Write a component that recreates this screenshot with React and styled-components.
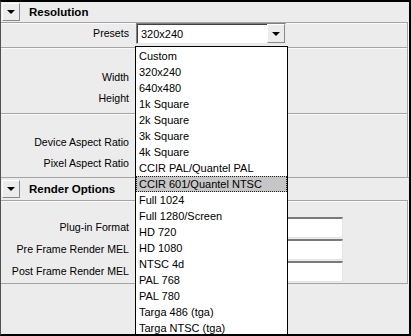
import React from 'react';
import styled, { createGlobalStyle } from 'styled-components';

const GlobalStyle = createGlobalStyle`
  html, body {
    margin: 0;
    padding: 0;
    background: #ececec;
  }
  body {
    font-family: "Liberation Sans", Arial, sans-serif;
  }
`;

const Window = styled.div`
  position: relative;
  width: 411px;
  height: 336px;
  box-sizing: border-box;
  background: #ececec;
  border-top: 2px solid #000;
  border-left: 1px solid #505050;
  border-right: 2px solid #000;
  border-bottom: 2px solid #000;
  overflow: hidden;
  font-size: 10.6px;
  color: #000;
`;

const Header = styled.div`
  display: flex;
  align-items: center;
  gap: 9px;
  height: ${p => p.$height}px;
  padding-left: 1px;
  border-top: ${p => (p.$divider ? '1px solid #a4a4a4' : 'none')};
`;

const Toggle = styled.div`
  width: 18px;
  height: 18px;
  box-sizing: border-box;
  display: flex;
  align-items: center;
  justify-content: center;
  background: #ececec;
  border-top: 1px solid #fff;
  border-left: 1px solid #fff;
  border-right: 1px solid #8a8a8a;
  border-bottom: 1px solid #8a8a8a;
`;

const DownTri = styled.div`
  width: 0;
  height: 0;
  border-left: ${p => p.$size}px solid transparent;
  border-right: ${p => p.$size}px solid transparent;
  border-top: ${p => p.$size}px solid #000;
`;

const Title = styled.div`
  font-weight: bold;
  font-size: 11.5px;
`;

const Frame = styled.div`
  display: flex;
  flex-direction: column;
  margin-right: 1px;
  padding-top: ${p => p.$padTop}px;
  padding-bottom: ${p => p.$padBottom}px;
  border-top: 1px solid #a4a4a4;
  border-right: 1px solid #a4a4a4;
  border-bottom: ${p => (p.$last ? '1px solid #a4a4a4' : 'none')};
  box-shadow: inset 0 1px 0 #fafafa, 1px 0 0 #fafafa;
`;

const Row = styled.div`
  display: flex;
  align-items: flex-start;
  gap: 7px;
  height: ${p => p.$height}px;
`;

const Label = styled.div`
  width: 128px;
  text-align: right;
  line-height: 21px;
  white-space: nowrap;
`;

const Combo = styled.div`
  display: flex;
  align-items: center;
  justify-content: space-between;
  width: 150px;
  height: 21px;
  box-sizing: border-box;
  background: #fff;
  border-top: 1px solid #808080;
  border-left: 1px solid #808080;
  border-right: 1px solid #e8e8e8;
  border-bottom: 1px solid #e8e8e8;
  box-shadow: inset 1px 1px 0 #404040;
  padding-left: 4px;
  font-size: 11px;
`;

const ComboButton = styled.div`
  width: 18px;
  height: 19px;
  box-sizing: border-box;
  display: flex;
  align-items: center;
  justify-content: center;
  background: #ececec;
  border-top: 1px solid #fff;
  border-left: 1px solid #fff;
  border-right: 1px solid #8a8a8a;
  border-bottom: 1px solid #8a8a8a;
`;

const Field = styled.div`
  width: ${p => p.$width}px;
  height: 21px;
  box-sizing: border-box;
  background: #fff;
  border-top: 2px solid #7a7a7a;
  border-left: 2px solid #7a7a7a;
  border-right: 1px solid #e4e4e4;
  border-bottom: 1px solid #e4e4e4;
`;

const DropList = styled.ul`
  position: absolute;
  left: 134px;
  top: 44px;
  width: 153px;
  height: 290px;
  box-sizing: border-box;
  margin: 0;
  padding: 1px 0 0;
  list-style: none;
  background: #fff;
  border: 1px solid #000;
  font-size: 11px;
`;

const Item = styled.li`
  height: 16px;
  line-height: 14px;
  box-sizing: border-box;
  padding-left: 2px;
  white-space: nowrap;
  background: ${p => (p.$active ? '#c6c6c6' : 'transparent')};
  border: 1px dotted ${p => (p.$active ? '#222' : 'transparent')};
`;

const presets = [
  'Custom',
  '320x240',
  '640x480',
  '1k Square',
  '2k Square',
  '3k Square',
  '4k Square',
  'CCIR PAL/Quantel PAL',
  'CCIR 601/Quantel NTSC',
  'Full 1024',
  'Full 1280/Screen',
  'HD 720',
  'HD 1080',
  'NTSC 4d',
  'PAL 768',
  'PAL 780',
  'Targa 486 (tga)',
  'Targa NTSC (tga)',
];

const App = () => (
  <>
    <GlobalStyle />
    <Window>
      <Header $height={20}>
        <Toggle><DownTri $size={4} /></Toggle>
        <Title>Resolution</Title>
      </Header>
      <Frame $padTop={0} $padBottom={3}>
        <Row $height={21}>
          <Label>Presets</Label>
          <Combo>
            320x240
            <ComboButton><DownTri $size={4} /></ComboButton>
          </Combo>
        </Row>
      </Frame>
      <Frame $padTop={19} $padBottom={4}>
        <Row $height={21}><Label>Width</Label><Field $width={70} /></Row>
        <Row $height={21}><Label>Height</Label><Field $width={70} /></Row>
      </Frame>
      <Frame $padTop={18} $padBottom={3}>
        <Row $height={21}><Label>Device Aspect Ratio</Label><Field $width={70} /></Row>
        <Row $height={21}><Label>Pixel Aspect Ratio</Label><Field $width={70} /></Row>
      </Frame>
      <Header $height={22} $divider>
        <Toggle><DownTri $size={4} /></Toggle>
        <Title>Render Options</Title>
      </Header>
      <Frame $padTop={16} $padBottom={0} $last>
        <Row $height={22}><Label>Plug-in Format</Label><Field $width={207} /></Row>
        <Row $height={22}><Label>Pre Frame Render MEL</Label><Field $width={207} /></Row>
        <Row $height={22}><Label>Post Frame Render MEL</Label><Field $width={207} /></Row>
      </Frame>
      <DropList>
        {presets.map(name => (
          <Item key={name} $active={name === 'CCIR 601/Quantel NTSC'}>{name}</Item>
        ))}
      </DropList>
    </Window>
  </>
);

export default App;
